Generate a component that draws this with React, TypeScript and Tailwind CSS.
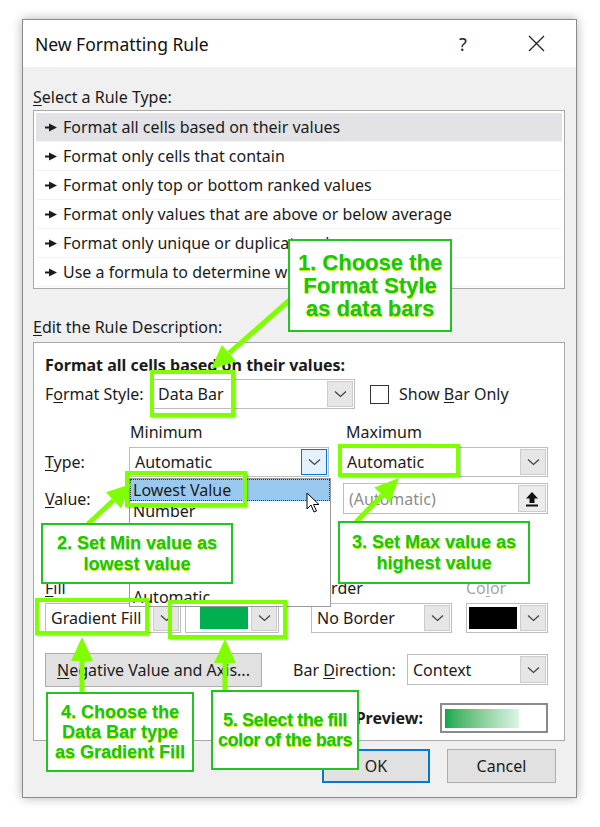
import React from "react";

type ArrowDef = { x1: number; y1: number; x2: number; y2: number };

// annotation arrows, page coordinates (tail -> tip)
const arrows: ArrowDef[] = [
  { x1: 292, y1: 298, x2: 211, y2: 369 },
  { x1: 88, y1: 524, x2: 131, y2: 484 },
  { x1: 356, y1: 522, x2: 399, y2: 478 },
  { x1: 82, y1: 694, x2: 82, y2: 637 },
  { x1: 225, y1: 692, x2: 225, y2: 639 },
];

function arrowShape(a: ArrowDef, head = 24, half = 11) {
  const dx = a.x2 - a.x1;
  const dy = a.y2 - a.y1;
  const len = Math.hypot(dx, dy);
  const ux = dx / len;
  const uy = dy / len;
  const bx = a.x2 - ux * head;
  const by = a.y2 - uy * head;
  const px = -uy * half;
  const py = ux * half;
  return {
    bx,
    by,
    points: `${a.x2},${a.y2} ${bx + px},${by + py} ${bx - px},${by - py}`,
  };
}

function Chevron() {
  return (
    <svg width="13" height="8" viewBox="0 0 13 8">
      <polyline
        points="1,1.5 6.5,6.5 12,1.5"
        fill="none"
        stroke="#404040"
        strokeWidth="1.2"
      />
    </svg>
  );
}

function Combo({
  width,
  children,
  variant = "normal",
}: {
  width: string;
  children?: React.ReactNode;
  variant?: "normal" | "focus";
}) {
  return (
    <div className={`flex h-full border border-[#bdbdbd] bg-white ${width}`}>
      <div className="flex flex-1 items-center px-[5px] overflow-hidden whitespace-nowrap">
        {children}
      </div>
      {variant === "focus" ? (
        <div className="m-[1px] flex w-[26px] items-center justify-center border border-[#0078d7] bg-[#e5f1fb]">
          <Chevron />
        </div>
      ) : (
        <div className="m-[1px] flex w-[26px] items-center justify-center border border-[#cccccc] bg-[#e6e6e6]">
          <Chevron />
        </div>
      )}
    </div>
  );
}

function U({ children }: { children: React.ReactNode }) {
  return <span className="underline underline-offset-2">{children}</span>;
}

function RuleArrow() {
  return (
    <svg width="13" height="9" viewBox="0 0 13 9" className="shrink-0">
      <rect x="0" y="3.5" width="5" height="2" fill="#1b1b1b" />
      <polygon points="4,0.5 12,4.5 4,8.5" fill="#1b1b1b" />
    </svg>
  );
}

const ruleTypes = [
  "Format all cells based on their values",
  "Format only cells that contain",
  "Format only top or bottom ranked values",
  "Format only values that are above or below average",
  "Format only unique or duplicate values",
  "Use a formula to determine which cells to format",
];

const dropItems = [
  "Lowest Value",
  "Number",
  "Percent",
  "Formula",
  "Percentile",
  "Automatic",
];

export default function App() {
  return (
    <div className="relative h-[827px] w-[600px] overflow-hidden bg-white font-['Noto_Sans',sans-serif] text-[16px] leading-[20px] text-[#1b1b1b]">
      <div className="pl-[22px] pt-[19px]">
        <div className="flex h-[779px] w-[555px] flex-col border border-[#8a8a8a] bg-[#f0f0f0] shadow-[0_0_10px_rgba(0,0,0,0.3)]">
          {/* title bar */}
          <div className="flex h-[47px] items-center bg-white pl-[12px] pr-[31px]">
            <div className="flex-1 text-[17.5px] text-[#111]">New Formatting Rule</div>
            <div className="w-[12px] text-[18px] text-[#222]">?</div>
            <svg width="17" height="17" viewBox="0 0 17 17" className="ml-[57px]">
              <path d="M1 1 L16 16 M16 1 L1 16" stroke="#222" strokeWidth="1.3" />
            </svg>
          </div>

          {/* body */}
          <div className="flex flex-1 flex-col pl-[10px] pr-[11px]">
            <div className="mt-[20px] h-[20px]">
              <U>S</U>elect a Rule Type:
            </div>
            <div className="mt-[3px] h-[179px] border border-[#a8a8a8] bg-white p-[2px]">
              {ruleTypes.map((t, i) => (
                <div
                  key={t}
                  className={
                    i === 0
                      ? "flex h-[29px] items-center gap-[5px] border-b border-[#f2f2f2] bg-[#e2e2e7] pl-[9px] whitespace-nowrap"
                      : "flex h-[29px] items-center gap-[5px] border-b border-[#f2f2f2] pl-[9px] whitespace-nowrap"
                  }
                >
                  <RuleArrow />
                  <span>{t}</span>
                </div>
              ))}
            </div>

            <div className="mt-[28px] h-[20px]">
              <U>E</U>dit the Rule Description:
            </div>
            <div className="mt-[5px] flex h-[399px] flex-col border border-[#a8a8a8] bg-white pl-[11px] pr-[16px]">
              <div className="mt-[12px] h-[20px] font-bold">
                Format all cells based on their values:
              </div>

              <div className="mt-[4px] flex h-[30px] items-center">
                <div className="w-[107px]">
                  F<U>o</U>rmat Style:
                </div>
                <Combo width="w-[203px]">Data Bar</Combo>
                <div className="ml-[15px] h-[19px] w-[19px] border border-[#333] bg-white" />
                <div className="ml-[10px]">
                  Show <U>B</U>ar Only
                </div>
              </div>

              <div className="mt-[13px] flex h-[20px] items-center">
                <div className="w-[85px]" />
                <div className="w-[216px]">Minimum</div>
                <div>Maximum</div>
              </div>

              <div className="mt-[5px] flex h-[30px] items-center">
                <div className="w-[84px]">
                  <U>T</U>ype:
                </div>
                <Combo width="w-[200px]" variant="focus">
                  Automatic
                </Combo>
                <div className="ml-[12px] flex h-full">
                  <Combo width="w-[207px]">Automatic</Combo>
                </div>
              </div>

              <div className="mt-[6px] flex h-[31px] items-center">
                <div className="w-[84px]">
                  <U>V</U>alue:
                </div>
                <div className="h-full w-[200px]" />
                <div className="ml-[14px] flex h-full w-[205px] border border-[#bdbdbd] bg-white">
                  <div className="flex flex-1 items-center px-[5px] text-[#8c8c8c]">
                    (Automatic)
                  </div>
                  <div className="m-[1px] flex w-[28px] items-center justify-center border border-[#cccccc] bg-[#ececec]">
                    <svg width="14" height="16" viewBox="0 0 14 16">
                      <polygon points="7,1 13,7.5 9.5,7.5 9.5,12 4.5,12 4.5,7.5 1,7.5" fill="#111" />
                      <rect x="1" y="13.5" width="12" height="2" fill="#111" />
                    </svg>
                  </div>
                </div>
              </div>

              <div className="mt-[64px] flex h-[20px] items-center">
                <div className="w-[266px]">
                  <U>F</U>ill
                </div>
                <div className="w-[155px]">
                  B<U>o</U>rder
                </div>
                <div className="text-[#a6a6a6]">
                  Co<U>l</U>or
                </div>
              </div>

              <div className="mt-[5px] flex h-[30px] items-center">
                <Combo width="w-[136px]">Gradient Fill</Combo>
                <div className="ml-[4px] flex h-full w-[94px] border border-[#bdbdbd] bg-white">
                  <div className="flex flex-1 items-center pl-[14px] pr-[2px]">
                    <div className="h-[22px] w-full bg-[#00b050]" />
                  </div>
                  <div className="m-[1px] flex w-[26px] items-center justify-center border border-[#cccccc] bg-[#e6e6e6]">
                    <Chevron />
                  </div>
                </div>
                <div className="ml-[32px] flex h-full">
                  <Combo width="w-[141px]">No Border</Combo>
                </div>
                <div className="ml-[14px] flex h-full w-[82px] border border-[#bdbdbd] bg-white">
                  <div className="flex flex-1 items-center pl-[2px] pr-[2px]">
                    <div className="h-[22px] w-full bg-black" />
                  </div>
                  <div className="m-[1px] flex w-[26px] items-center justify-center border border-[#cccccc] bg-[#e6e6e6]">
                    <Chevron />
                  </div>
                </div>
              </div>

              <div className="mt-[19px] flex h-[35px] items-center">
                <div className="flex h-[34px] w-[217px] items-center justify-center border border-[#adadad] bg-[#e1e1e1]">
                  <span>
                    <U>N</U>egative Value and Axis...
                  </span>
                </div>
                <div className="ml-[31px] w-[114px] whitespace-nowrap">
                  Bar <U>D</U>irection:
                </div>
                <div className="flex h-[31px]">
                  <Combo width="w-[141px]">Context</Combo>
                </div>
              </div>

              <div className="mt-[16px] flex h-[30px] items-center justify-end">
                <div className="mr-[17px] font-bold">Preview:</div>
                <div className="flex h-[30px] w-[108px] items-center border-2 border-[#8a8a8a] bg-white p-[3px]">
                  <div className="h-[19px] w-[74px] bg-linear-to-r from-[#00a84f] to-[#dcf5e6]" />
                </div>
              </div>
            </div>

            <div className="mr-[9px] mt-[8px] flex justify-end gap-[17px]">
              <div className="flex h-[34px] w-[108px] items-center justify-center border-2 border-[#0078d7] bg-[#e1e1e1]">
                OK
              </div>
              <div className="flex h-[34px] w-[109px] items-center justify-center border border-[#adadad] bg-[#e1e1e1]">
                Cancel
              </div>
            </div>
          </div>
        </div>
      </div>

      {/* open dropdown of the minimum type */}
      <div className="absolute left-[129px] top-[478px] h-[129px] w-[202px] overflow-hidden border border-[#9a9a9a] bg-white">
        {dropItems.map((d, i) => (
          <div
            key={d}
            className={
              i === 0
                ? "flex h-[21.5px] items-center border border-dotted border-[#333] bg-[#99c9ef] px-[2px]"
                : "flex h-[21.5px] items-center px-[3px]"
            }
          >
            {d}
          </div>
        ))}
      </div>

      {/* mouse pointer */}
      <svg
        width="14"
        height="22"
        viewBox="0 0 14 22"
        className="absolute left-[306px] top-[492px]"
      >
        <path
          d="M1 1 L1 17 L5 13 L8 20 L10.5 19 L7.5 12.5 L13 12.5 Z"
          fill="#fff"
          stroke="#000"
          strokeWidth="1"
          strokeLinejoin="round"
        />
      </svg>

      {/* lime highlight boxes */}
      <div className="absolute left-[150px] top-[370px] h-[47px] w-[85px] border-4 border-[#7fff00] shadow-[1px_1px_2px_rgba(0,0,0,0.3)]" />
      <div className="absolute left-[125px] top-[471px] h-[36px] w-[122px] border-4 border-[#7fff00] shadow-[1px_1px_2px_rgba(0,0,0,0.3)]" />
      <div className="absolute left-[338px] top-[444px] h-[33px] w-[122px] border-4 border-[#7fff00] shadow-[1px_1px_2px_rgba(0,0,0,0.3)]" />
      <div className="absolute left-[35px] top-[598px] h-[37px] w-[114px] border-4 border-[#7fff00] shadow-[1px_1px_2px_rgba(0,0,0,0.3)]" />
      <div className="absolute left-[168px] top-[600px] h-[39px] w-[119px] border-4 border-[#7fff00] shadow-[1px_1px_2px_rgba(0,0,0,0.3)]" />

      {/* arrows */}
      <svg
        width="600"
        height="827"
        viewBox="0 0 600 827"
        className="pointer-events-none absolute left-0 top-0"
      >
        {arrows.map((a, i) => {
          const s = arrowShape(a);
          return (
            <g key={i}>
              <line
                x1={a.x1}
                y1={a.y1}
                x2={s.bx}
                y2={s.by}
                stroke="#7fff00"
                strokeWidth="5"
              />
              <polygon points={s.points} fill="#7fff00" />
            </g>
          );
        })}
      </svg>

      {/* callouts */}
      <div className="absolute left-[288px] top-[239px] flex h-[93px] w-[164px] flex-col items-center justify-center border-2 border-[#22c322] bg-white font-['Liberation_Sans',Arial,sans-serif] text-[22px] font-bold leading-[23px] text-[#14c814] [text-shadow:0.6px_0.6px_0_#d6e600]">
        <div>1. Choose the</div>
        <div>Format Style</div>
        <div>as data bars</div>
      </div>
      <div className="absolute left-[41px] top-[523px] flex h-[61px] w-[192px] flex-col items-center justify-center border-2 border-[#22c322] bg-white font-['Liberation_Sans',Arial,sans-serif] text-[18px] font-bold leading-[21px] text-[#14c814] [text-shadow:0.6px_0.6px_0_#d6e600]">
        <div>2. Set Min value as</div>
        <div>lowest value</div>
      </div>
      <div className="absolute left-[338px] top-[521px] flex h-[63px] w-[192px] flex-col items-center justify-center border-2 border-[#22c322] bg-white font-['Liberation_Sans',Arial,sans-serif] text-[18px] font-bold leading-[21px] text-[#14c814] [text-shadow:0.6px_0.6px_0_#d6e600]">
        <div>3. Set Max value as</div>
        <div>highest value</div>
      </div>
      <div className="absolute left-[46px] top-[692px] flex h-[80px] w-[148px] flex-col items-center justify-center border-2 border-[#22c322] bg-white font-['Liberation_Sans',Arial,sans-serif] text-[18px] font-bold leading-[20px] text-[#14c814] [text-shadow:0.6px_0.6px_0_#d6e600]">
        <div>4. Choose the</div>
        <div>Data Bar type</div>
        <div>as Gradient Fill</div>
      </div>
      <div className="absolute left-[211px] top-[690px] flex h-[80px] w-[148px] flex-col items-center justify-center border-2 border-[#22c322] bg-white font-['Liberation_Sans',Arial,sans-serif] text-[18px] font-bold leading-[20px] tracking-[-0.4px] text-[#14c814] [text-shadow:0.6px_0.6px_0_#d6e600]">
        <div>5. Select the fill</div>
        <div>color of the bars</div>
      </div>
    </div>
  );
}
